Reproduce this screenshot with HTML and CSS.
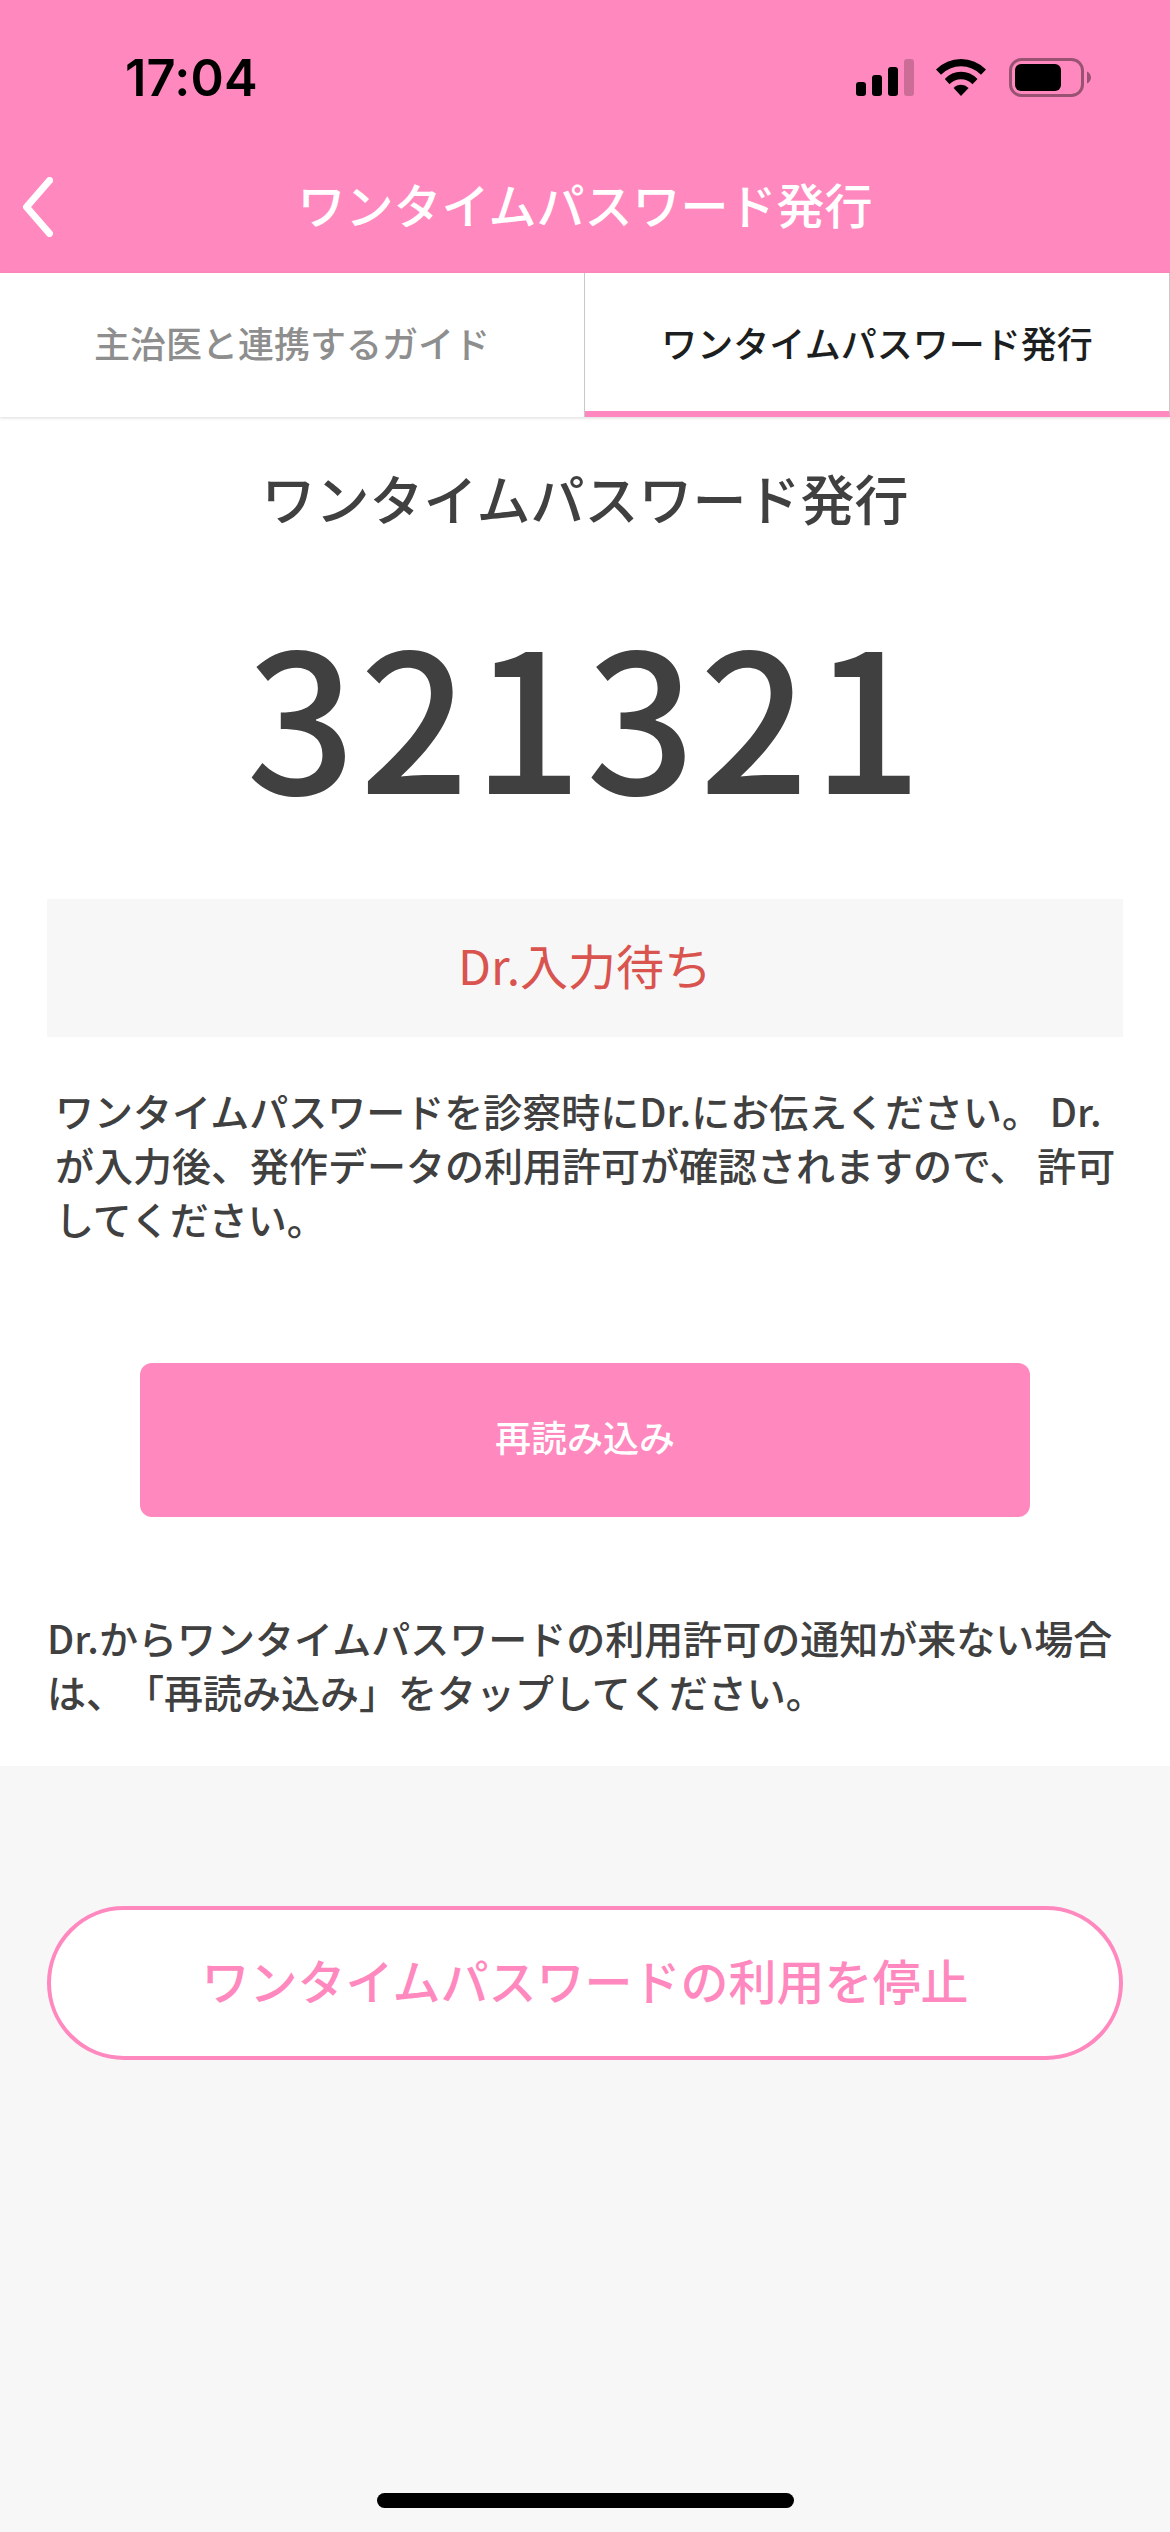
FILE: index.html
```html
<!DOCTYPE html>
<html lang="ja">
<head>
<meta charset="utf-8">
<title>ワンタイムパスワード発行</title>
<link rel="stylesheet" href="styles.css">
</head>
<body>
<div class="screen">
  <header class="header">
    <div class="statusbar">
      <span class="time">17:04</span>
      <div class="indicators">
        <svg class="signal" width="58" height="37" viewBox="0 0 58 37">
          <rect x="0" y="23" width="10" height="14" rx="3"/>
          <rect x="16" y="16" width="10" height="21" rx="3"/>
          <rect x="32" y="8" width="10" height="29" rx="3"/>
          <rect x="48" y="0" width="10" height="37" rx="3" opacity=".2"/>
        </svg>
        <svg class="wifi" width="50" height="37" viewBox="0 0 50 37">
          <path d="M0 10.6Q10.5 0 25 0T50 10.6L45 15.7Q36.500 7.200 25 7.200T5 15.700Z"/>
          <path d="M8.800 20Q15.500 12.800 25 12.800T41.500 20L36.500 25.200Q31.500 20.200 25 20.200T13.500 25.200Z"/>
          <path d="M17.600 29Q20.700 25.800 25 25.800T32.600 29L25 37Z"/>
        </svg>
        <svg class="battery" width="82" height="39" viewBox="0 0 82 39">
          <rect x="1.500" y="1.500" width="72" height="36" rx="11" fill="none" stroke="#000" stroke-width="3" opacity=".4"/>
          <rect x="6" y="6" width="46" height="27" rx="6"/>
          <path d="M78 13.500C80.500 14.500 82 17 82 19.500S80.500 24.500 78 25.500Z" opacity=".4"/>
        </svg>
      </div>
    </div>
    <div class="navbar">
      <a class="back"><svg width="30" height="60" viewBox="0 0 30 60"><path d="M26.500 3.500L3.500 30L26.500 56.500" fill="none" stroke="#fff" stroke-width="7" stroke-linecap="round" stroke-linejoin="round"/></svg></a>
      <h1 class="title">ワンタイムパスワード発行</h1>
    </div>
  </header>
  <nav class="tabs">
    <a class="tab">主治医と連携するガイド</a>
    <a class="tab tab-active">ワンタイムパスワード発行</a>
  </nav>
  <main class="panel">
    <h2 class="heading">ワンタイムパスワード発行</h2>
    <p class="code">321321</p>
    <p class="state">Dr.入力待ち</p>
    <p class="text text-inset">ワンタイムパスワードを診察時にDr.にお伝えください。 Dr.が入力後、発作データの利用許可が確認されますので、 許可してください。</p>
    <button class="reload">再読み込み</button>
    <p class="text">Dr.からワンタイムパスワードの利用許可の通知が来ない場合は、「再読み込み」をタップしてください。</p>
  </main>
  <footer class="footer">
    <button class="stop">ワンタイムパスワードの利用を停止</button>
    <div class="home"></div>
  </footer>
</div>
</body>
</html>
```
FILE: styles.css
```css
* { box-sizing: border-box; }
body {
  margin: 0;
  background: #f7f7f7;
  color: #404040;
  font-family: "Noto Sans CJK JP", sans-serif;
  font-weight: 500;
  text-spacing-trim: space-all;
}
h1, h2, p { margin: 0; font-weight: 500; }
button { font-family: inherit; font-weight: 500; padding: 0; border: 0; }
.screen { width: 1170px; height: 2532px; display: flex; flex-direction: column; overflow: hidden; }
.header { height: 273px; background: #ff89be; }
.statusbar { height: 141px; display: flex; justify-content: space-between; padding: 0 79px 0 125px; }
.time { margin-top: 46px; font: 600 50.500px/64px Inter, sans-serif; color: #000; letter-spacing: .2px; }
.indicators { display: flex; align-items: flex-start; padding-top: 58px; }
.signal, .wifi { margin-top: 1px; }
.wifi { margin-left: 22px; }
.battery { margin-left: 23px; }
.navbar { height: 132px; display: grid; grid-template-columns: 120px 1fr 120px; align-items: center; }
.back { display: flex; padding: 0 0 0 23px; }
.title { padding-bottom: 8px; font-size: 48px; line-height: 72px; text-align: center; color: #fff; }
.tabs { height: 144px; display: flex; background: #fff; box-shadow: 0 1px 3px rgba(0,0,0,.15); flex: none; z-index: 1; }
.tab { flex: 1; display: flex; align-items: center; justify-content: center; padding-bottom: 6px; border-right: 1px solid #c8c8c8; font-size: 36px; color: #8e8e8e; }
.tab-active { color: #1c1e20; border-bottom: 6px solid #ff89be; padding-bottom: 0; }
.panel { height: 1349px; background: #fff; padding: 45px 47px 0; display: flex; flex-direction: column; flex: none; }
.heading { font-size: 54px; line-height: 72px; text-align: center; }
.code { margin-top: 36px; padding-left: 2px; font-size: 192px; line-height: 280px; height: 280px; letter-spacing: 3.840px; text-align: center; }
.state { margin-top: 49px; height: 138px; line-height: 130px; background: #f7f7f7; color: #d9534f; font-size: 48px; font-weight: 400; text-align: center; }
.text { font-size: 39px; line-height: 54px; }
.text-inset { margin-top: 46px; padding: 0 0 0 8px; }
.reload { align-self: center; width: 890px; height: 154px; margin: 118px 0 93px; padding-bottom: 8px; border-radius: 12px; background: #ff89be; color: #fff; font-size: 36px; }
.footer { flex: 1; padding: 140px 47px 24px; display: flex; flex-direction: column; justify-content: space-between; align-items: center; }
.stop { width: 100%; height: 154px; padding-bottom: 8px; border: 4px solid #ff89be; border-radius: 77px; background: #fff; color: #ff89be; font-size: 48px; }
.home { width: 417px; height: 15px; border-radius: 8px; background: #000; }
```
